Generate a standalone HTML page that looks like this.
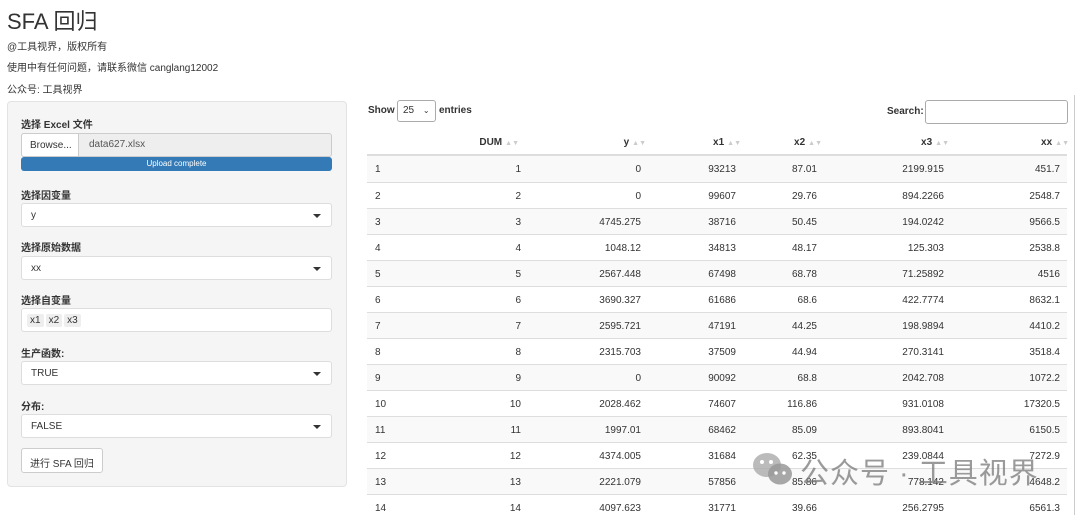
<!DOCTYPE html>
<html><head><meta charset="utf-8"><style>
*{box-sizing:border-box}
body{margin:0;width:1080px;height:515px;overflow:hidden;background:#fff;font-family:"Liberation Sans","Noto Sans CJK SC",sans-serif;color:#333;font-size:10px;position:relative}
.a{position:absolute}
h1{position:absolute;left:7px;top:4px;margin:0;font-size:22px;font-weight:normal;color:#333}
.p{position:absolute;left:7px;font-size:10px;color:#333}
.side{left:7px;top:101px;width:340px;height:386px;background:#f5f5f5;border:1px solid #e3e3e3;border-radius:4px}
.lbl{position:absolute;left:21px;font-weight:bold;font-size:10px}
.sel{position:absolute;left:21px;width:311px;height:24px;background:#fff;border:1px solid #ddd;border-radius:3px;padding:6px 9px;font-size:10px}
.ar:after{content:"";position:absolute;right:10px;top:10px;border-left:4px solid transparent;border-right:4px solid transparent;border-top:4px solid #333}
.tag{display:inline-block;background:#eee;padding:1px 3px;margin-right:2px;border-radius:2px}
.row{position:absolute;left:367px;width:700px;height:26px;border-top:1px solid #ddd}
.row span,.hd span{position:absolute;top:8px;text-align:right}
.hd span{font-weight:bold;top:9px}
.s{color:#ccc;font-size:7px;margin-left:3px;font-style:normal}
</style></head><body>
<h1>SFA 回归</h1>
<div class="p" style="top:38px">@工具视界，版权所有</div>
<div class="p" style="top:59px">使用中有任何问题，请联系微信 canglang12002</div>
<div class="p" style="top:81px">公众号: 工具视界</div>
<div class="a side"></div>
<div class="lbl" style="top:116px">选择 Excel 文件</div>
<div class="a" style="left:21px;top:133px;width:311px;height:24px;border:1px solid #ccc;border-radius:3px;background:#eee"></div>
<div class="a" style="left:21px;top:133px;width:58px;height:24px;background:#fff;border:1px solid #ccc;border-radius:3px 0 0 3px;padding:6px 8px">Browse...</div>
<div class="a" style="left:89px;top:139px;color:#555">data627.xlsx</div>
<div class="a" style="left:21px;top:157px;width:311px;height:14px;background:#337ab7;border-radius:3px;color:#fff;font-size:8px;text-align:center;line-height:14px">Upload complete</div>
<div class="lbl" style="top:187px">选择因变量</div>
<div class="sel ar" style="top:203px">y</div>
<div class="lbl" style="top:239px">选择原始数据</div>
<div class="sel ar" style="top:256px">xx</div>
<div class="lbl" style="top:292px">选择自变量</div>
<div class="sel" style="top:308px;padding:5px 5px"><span class="tag">x1</span><span class="tag">x2</span><span class="tag">x3</span></div>
<div class="lbl" style="top:345px">生产函数:</div>
<div class="sel ar" style="top:361px">TRUE</div>
<div class="lbl" style="top:398px">分布:</div>
<div class="sel ar" style="top:414px">FALSE</div>
<div class="a" style="left:21px;top:448px;width:82px;height:25px;background:#fff;border:1px solid #ccc;border-radius:3px;padding:6px 8px;white-space:nowrap">进行 SFA 回归</div>

<div class="a" style="left:368px;top:105px;font-weight:bold">Show</div>
<div class="a" style="left:397px;top:100px;width:39px;height:22px;border:1px solid #aaa;border-radius:3px;padding:4px 5px">25 <span style="margin-left:6px;font-size:8px">⌄</span></div>
<div class="a" style="left:439px;top:105px;font-weight:bold">entries</div>
<div class="a" style="left:887px;top:106px;font-weight:bold">Search:</div>
<div class="a" style="left:925px;top:100px;width:143px;height:24px;border:1px solid #aaa;border-radius:3px"></div>
<div class="a hd" style="left:367px;top:128px;width:700px;height:28px;border-bottom:2px solid #ddd">
<span style="right:548px">DUM<i class="s">▲▼</i></span>
<span style="right:421px">y<i class="s">▲▼</i></span>
<span style="right:326px">x1<i class="s">▲▼</i></span>
<span style="right:245px">x2<i class="s">▲▼</i></span>
<span style="right:118px">x3<i class="s">▲▼</i></span>
<span style="right:-2px">xx<i class="s">▲▼</i></span>
</div>
<div id="t"></div>
<script>
var d=[[0,93213,"87.01","2199.915","451.7"],[0,99607,"29.76","894.2266","2548.7"],["4745.275",38716,"50.45","194.0242","9566.5"],["1048.12",34813,"48.17","125.303","2538.8"],["2567.448",67498,"68.78","71.25892","4516"],["3690.327",61686,"68.6","422.7774","8632.1"],["2595.721",47191,"44.25","198.9894","4410.2"],["2315.703",37509,"44.94","270.3141","3518.4"],[0,90092,"68.8","2042.708","1072.2"],["2028.462",74607,"116.86","931.0108","17320.5"],["1997.01",68462,"85.09","893.8041","6150.5"],["4374.005",31684,"62.35","239.0844","7272.9"],["2221.079",57856,"85.86","778.142","4648.2"],["4097.623",31771,"39.66","256.2795","6561.3"]];
var h="";d.forEach(function(r,i){var top=156+i*26;h+='<div class="row" style="top:'+top+'px;background:'+(i%2==0?'#f9f9f9':'#fff')+(i==0?';border-top:none':'')+'"><span style="left:8px">'+(i+1)+'</span><span style="right:546px">'+(i+1)+'</span><span style="right:426px">'+r[0]+'</span><span style="right:331px">'+r[1]+'</span><span style="right:250px">'+r[2]+'</span><span style="right:123px">'+r[3]+'</span><span style="right:7px">'+r[4]+'</span></div>';});
document.getElementById("t").innerHTML=h;
</script>
<div class="a" style="left:1074px;top:95px;width:1px;height:420px;background:#ccc"></div>
<svg class="a" style="left:752px;top:452px" width="42" height="36" viewBox="0 0 42 36"><ellipse cx="15" cy="13" rx="14" ry="12" fill="#aaa" opacity=".8"/><ellipse cx="28" cy="22" rx="12" ry="10.5" fill="#999" opacity=".85"/><circle cx="10" cy="10" r="2" fill="#fff"/><circle cx="19" cy="10" r="2" fill="#fff"/><circle cx="24" cy="21" r="1.7" fill="#fff"/><circle cx="32" cy="21" r="1.7" fill="#fff"/></svg>
<div class="a" style="left:800px;top:450px;font-size:29px;color:rgba(120,120,120,.75);letter-spacing:1px">公众号 · 工具视界</div>
</body></html>
